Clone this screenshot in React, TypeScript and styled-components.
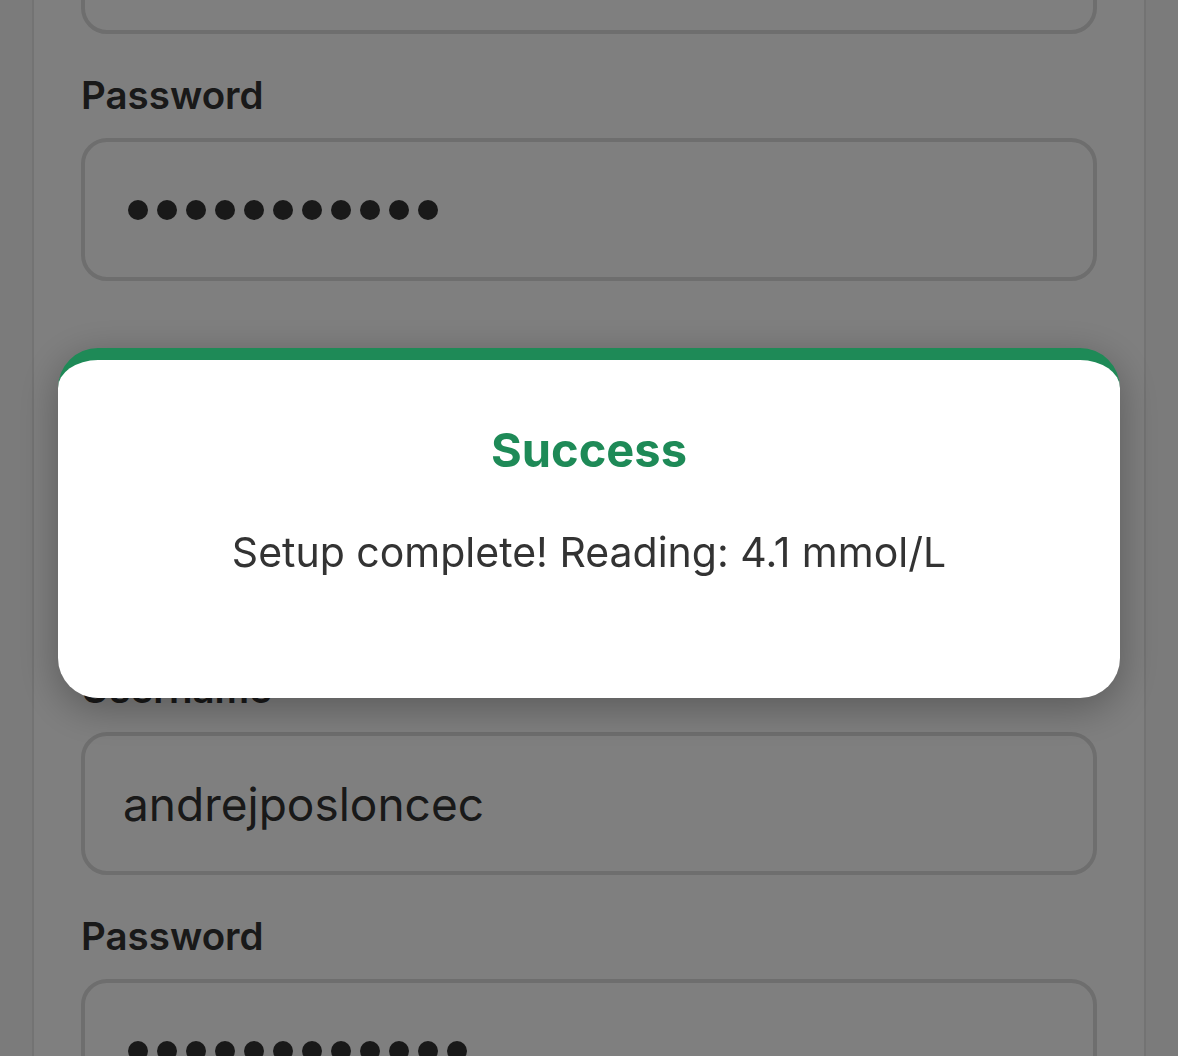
import React from "react"
import styled, { createGlobalStyle } from "styled-components"

const GlobalStyle = createGlobalStyle`
  html, body {
    margin: 0;
    padding: 0;
    background: #f6f6f6;
    overflow: hidden;
    font-family: 'Inter', 'Liberation Sans', sans-serif;
  }
  * { box-sizing: border-box; }
`

type FieldPropsType = {
    label: string
    value?: string
    dots?: number
}

const Field = (props: FieldPropsType) => {
    return (
        <StyledField>
            <Label>{props.label}</Label>
            <InputBox>
                {props.dots ? (
                    <Dots aria-label="password">
                        {Array.from({ length: props.dots }).map((_, i) => <Dot key={i} />)}
                    </Dots>
                ) : (
                    <Value>{props.value}</Value>
                )}
            </InputBox>
        </StyledField>
    )
}

export default function App() {
    return (
        <>
            <GlobalStyle />
            <Page>
                <Card>
                    <Field label="Email" value="" />
                    <Field label="Password" dots={11} />
                    <SectionBreak />
                    <Field label="Username" value="andrejposloncec" />
                    <Field label="Password" dots={12} />
                </Card>
            </Page>
            <Overlay>
                <Modal>
                    <Title>Success</Title>
                    <Message>Setup complete! Reading: 4.1 mmol/L</Message>
                </Modal>
            </Overlay>
        </>
    )
}

const Page = styled.div`
padding: 0 32px;
`

const Card = styled.div`
margin-top: -217px;
background: #ffffff;
border: 2px solid #e6e6e6;
border-radius: 24px;
padding: 41px 47px 200px;
display: flex;
flex-direction: column;
gap: 39px;
`

const StyledField = styled.div`
display: flex;
flex-direction: column;
gap: 21px;
`

const Label = styled.div`
color: #333333;
font-size: 38.5px;
font-weight: 600;
line-height: 44px;
`

const InputBox = styled.div`
height: 143px;
border: 4px solid #dcdcdc;
border-radius: 26px;
padding: 0 38px;
display: flex;
align-items: center;
`

const Value = styled.span`
color: #333333;
font-size: 46px;
line-height: 1;
`

const Dots = styled.div`
display: flex;
gap: 9px;
padding-left: 5px;
`

const Dot = styled.span`
width: 20px;
height: 20px;
border-radius: 50%;
background: #333333;
`

const SectionBreak = styled.div`
height: 308px;
`

const Overlay = styled.div`
position: fixed;
inset: 0;
background: rgba(0, 0, 0, 0.5);
display: flex;
justify-content: center;
align-items: flex-start;
padding: 348px 58px 0;
`

const Modal = styled.div`
width: 100%;
height: 350px;
background: #ffffff;
border-top: 12px solid #1e8a57;
border-radius: 40px;
box-shadow: 0 10px 40px rgba(0, 0, 0, 0.3);
padding-top: 61px;
display: flex;
flex-direction: column;
align-items: center;
gap: 48px;
`

const Title = styled.h2`
margin: 0;
color: #1e8a57;
font-size: 47px;
font-weight: 700;
line-height: 58px;
`

const Message = styled.p`
margin: 0;
color: #333333;
font-size: 41px;
line-height: 50px;
`
